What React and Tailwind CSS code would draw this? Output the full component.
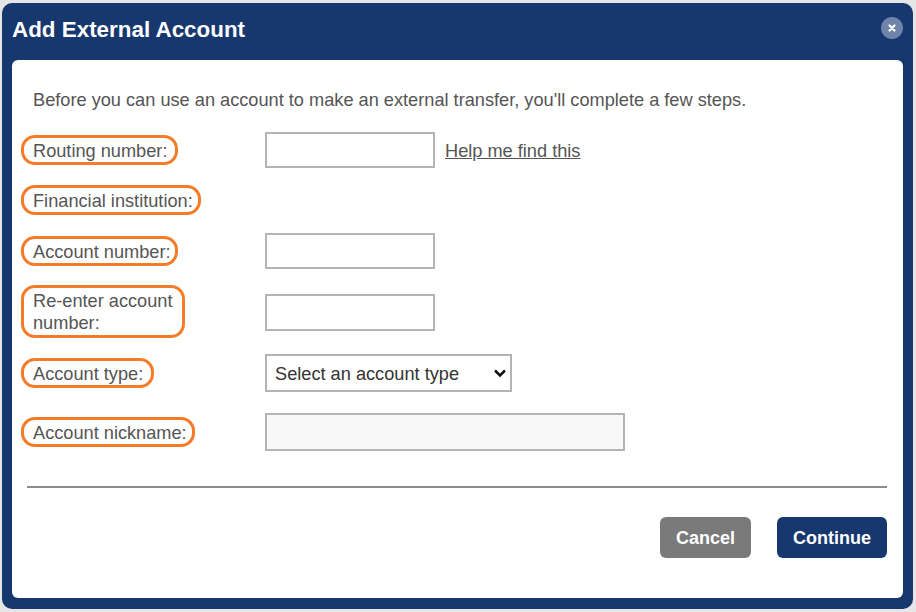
const font = "font-['Liberation_Sans',Arial,sans-serif]";

const Label = ({ children, width, className = "" }) => (
  <div className={`${width} ${className} rounded-[14px] border-[3px] border-[#f47b27] pl-[9px] pt-[2px] text-[18.2px] leading-[22px] text-[#555]`}>
    {children}
  </div>
);

const Row = ({ label, width, className, labelClass, children }) => (
  <div className={`flex items-center ${className}`}>
    <div className="w-[244px] shrink-0">
      <Label width={width} className={labelClass}>{label}</Label>
    </div>
    {children}
  </div>
);

const inputClass = "h-[36px] w-[170px] border-2 border-[#b4b4b4] bg-white";

export default function App() {
  return (
    <div className={`${font} h-[612px] w-[916px] overflow-hidden bg-[#e6e6e6] pb-[3px] pl-[2px] pr-[3px] pt-[3px]`}>
      <div className="flex h-[606px] w-[911px] flex-col rounded-[10px] bg-[#17376f] px-[10px] pb-[11px]">
        <div className="flex h-[57px] shrink-0 items-center justify-between pb-[5px]">
          <h1 className="pt-[2px] text-[22.4px] font-bold text-white">Add External Account</h1>
          <button className="mb-[2px] flex h-[22px] w-[22px] items-center justify-center rounded-full bg-[#6f84aa]">
            <svg width="10" height="10" viewBox="0 0 10 10">
              <path d="M2.5 2.5l5 5M7.5 2.5l-5 5" stroke="#fff" strokeWidth="2.2" strokeLinecap="round" />
            </svg>
          </button>
        </div>

        <div className="flex-1 rounded-[6px] bg-white pl-[9px] pr-[16px] pt-[30px]">
          <p className="pl-[12px] text-[18.2px] leading-[20px] text-[#555]">
            Before you can use an account to make an external transfer, you'll complete a few steps.
          </p>

          <Row label="Routing number:" width="w-[157px]" className="mt-[22px]">
            <div className={inputClass} />
            <a href="#" className="ml-[10px] pt-[3px] text-[18.2px] text-[#555] underline">Help me find this</a>
          </Row>
          <Row label="Financial institution:" width="w-[180px]" className="mt-[17px]">
            <span />
          </Row>
          <Row label="Account number:" width="w-[157px]" className="mt-[18px]">
            <div className={inputClass} />
          </Row>
          <Row label="Re-enter account number:" width="w-[164px]" labelClass="pb-[1px]" className="mt-[16px]">
            <div className="mt-[1px] h-[37px] w-[170px] border-2 border-[#b4b4b4] bg-white" />
          </Row>
          <Row label="Account type:" width="w-[133px]" className="mt-[16px]">
            <div className="flex h-[38px] w-[247px] items-center justify-between border-2 border-[#b4b4b4] bg-white pl-[8px] pr-[3px] text-[18.2px] text-[#333]">
              <span className="pt-[3px]">Select an account type</span>
              <svg width="14" height="10" viewBox="0 0 14 10">
                <path d="M2 2.5l5 5 5-5" fill="none" stroke="#111" strokeWidth="2.6" />
              </svg>
            </div>
          </Row>
          <Row label="Account nickname:" width="w-[174px]" className="mt-[21px]">
            <div className="h-[38px] w-[360px] border-2 border-[#b4b4b4] bg-[#f8f8f8]" />
          </Row>

          <div className="ml-[6px] mt-[35px] h-[2px] bg-[#8c8c8c]" />

          <div className="mt-[29px] flex justify-end gap-[26px]">
            <button className="h-[41px] w-[91px] rounded-[6px] bg-[#7a7a7a] pt-[1px] text-[18px] font-bold text-white">Cancel</button>
            <button className="h-[41px] w-[110px] rounded-[6px] bg-[#17376f] pt-[1px] text-[18px] font-bold text-white">Continue</button>
          </div>
        </div>
      </div>
    </div>
  );
}
